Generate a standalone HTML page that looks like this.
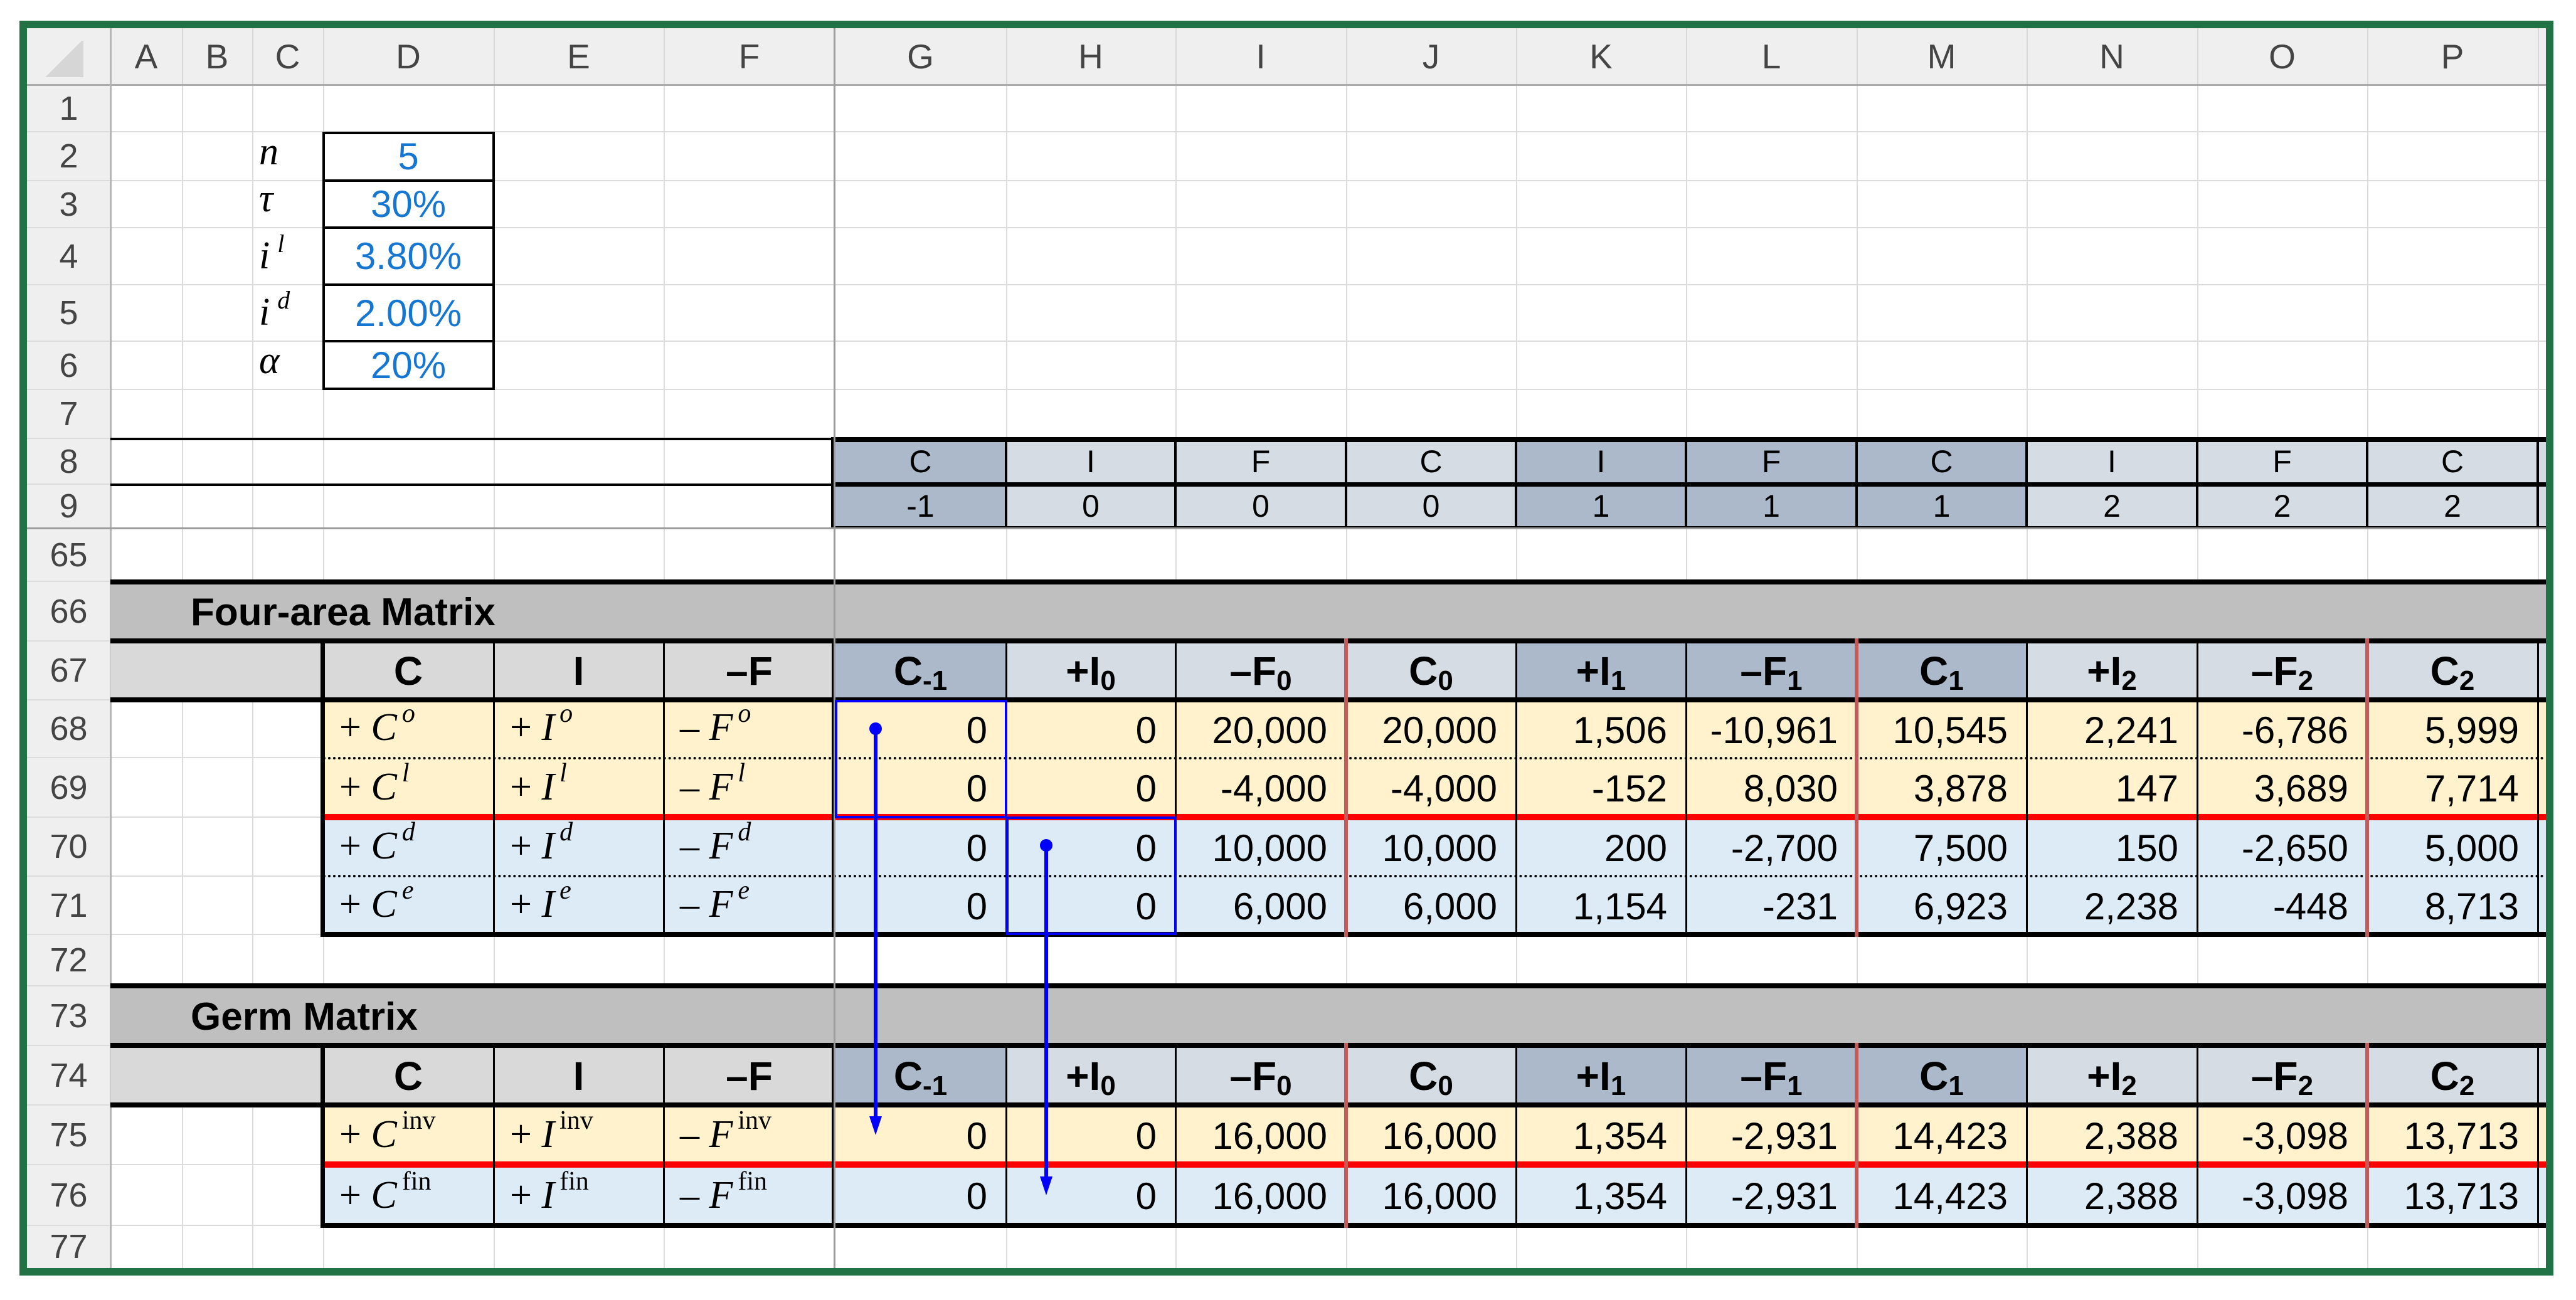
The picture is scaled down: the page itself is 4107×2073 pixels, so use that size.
<!DOCTYPE html>
<html><head><meta charset="utf-8"><style>
*{margin:0;padding:0}
body{width:4107px;height:2073px;background:#fff;position:relative;overflow:hidden;font-family:"Liberation Sans",Arial,sans-serif}
div{position:absolute;box-sizing:border-box}
.gv{top:136px;height:1886px;width:2px;background:#dcdcdc}
.gh{left:43px;width:4016px;height:2px;background:#dcdcdc}
.hv{top:44px;height:92px;width:2px;background:#d8d8d8}
.ch{top:44px;height:92px;display:flex;align-items:center;justify-content:center;font-size:55px;color:#444}
.rn{left:43px;width:133px;display:flex;align-items:center;justify-content:center;font-size:54px;color:#444}
.n{display:flex;align-items:center;justify-content:flex-end;padding-right:30px;padding-top:4px;font-size:60px;color:#000}
.hb{display:flex;align-items:center;justify-content:center;font-size:64px;font-weight:bold;padding-top:2px}
.hb sub{font-size:44px;position:relative;top:16px}
.s{display:flex;align-items:center;justify-content:center;font-size:50px}
.lb{display:flex;align-items:flex-end;padding-left:26px;padding-bottom:12px;font-family:"Liberation Serif",serif;font-size:62px;white-space:pre}
.lb i{font-style:italic}
.lb sup{font-size:42px;position:relative;top:-34px;margin-left:8px}
.pv{left:515px;width:272px;display:flex;align-items:center;justify-content:center;font-size:60px;color:#1677d2}
.pl{left:413px;font-family:"Liberation Serif",serif;font-style:italic;font-size:62px;display:flex;align-items:flex-end;padding-bottom:10px}
.pl sup{font-size:40px;position:relative;top:-32px;margin-left:12px}
.bk{background:#000}
.cD{left:515px;width:272px}.cE{left:787px;width:271px}.cF{left:1058px;width:273px}
.cG{left:1331px;width:273px}.cH{left:1604px;width:270px}.cI{left:1874px;width:272px}.cJ{left:2146px;width:271px}
.cK{left:2417px;width:271px}.cL{left:2688px;width:272px}.cM{left:2960px;width:271px}.cN{left:3231px;width:272px}
.cO{left:3503px;width:271px}.cP{left:3774px;width:272px}
.r67{top:1022px;height:94px}.r68{top:1116px;height:92px}.r69{top:1208px;height:95px}.r70{top:1303px;height:94px}.r71{top:1397px;height:93px}
.r74{top:1667px;height:95px}.r75{top:1762px;height:95px}.r76{top:1857px;height:97px}
.r8{top:699px;height:73px}.r9{top:772px;height:70px}
.dk{background:#acb9ca}.lt{background:#d6dce4}.gy{background:#d9d9d9}.ye{background:#fff2cc}.bl{background:#ddebf7}
</style></head><body>
<div style="left:43px;top:44px;width:4016px;height:92px;background:#efefef"></div>
<div style="left:43px;top:44px;width:133px;height:1979px;background:#efefef"></div>
<div style="left:70px;top:65px;width:63px;height:58px;background:linear-gradient(135deg,transparent 50%,#d6d6d6 50%)"></div>
<div class="hv" style="left:176px"></div><div class="hv" style="left:290px"></div><div class="hv" style="left:402px"></div><div class="hv" style="left:515px"></div><div class="hv" style="left:787px"></div><div class="hv" style="left:1058px"></div><div class="hv" style="left:1604px"></div><div class="hv" style="left:1874px"></div><div class="hv" style="left:2146px"></div><div class="hv" style="left:2417px"></div><div class="hv" style="left:2688px"></div><div class="hv" style="left:2960px"></div><div class="hv" style="left:3231px"></div><div class="hv" style="left:3503px"></div><div class="hv" style="left:3774px"></div><div class="hv" style="left:4046px"></div>
<div class="gv" style="left:290px"></div><div class="gv" style="left:402px"></div><div class="gv" style="left:515px"></div><div class="gv" style="left:787px"></div><div class="gv" style="left:1058px"></div><div class="gv" style="left:1604px"></div><div class="gv" style="left:1874px"></div><div class="gv" style="left:2146px"></div><div class="gv" style="left:2417px"></div><div class="gv" style="left:2688px"></div><div class="gv" style="left:2960px"></div><div class="gv" style="left:3231px"></div><div class="gv" style="left:3503px"></div><div class="gv" style="left:3774px"></div><div class="gv" style="left:4046px"></div>
<div class="gh" style="top:209px"></div><div class="gh" style="top:287px"></div><div class="gh" style="top:362px"></div><div class="gh" style="top:453px"></div><div class="gh" style="top:543px"></div><div class="gh" style="top:620px"></div><div class="gh" style="top:698px"></div><div class="gh" style="top:771px"></div><div class="gh" style="top:926px"></div><div class="gh" style="top:1021px"></div><div class="gh" style="top:1115px"></div><div class="gh" style="top:1207px"></div><div class="gh" style="top:1302px"></div><div class="gh" style="top:1396px"></div><div class="gh" style="top:1489px"></div><div class="gh" style="top:1571px"></div><div class="gh" style="top:1666px"></div><div class="gh" style="top:1761px"></div><div class="gh" style="top:1856px"></div><div class="gh" style="top:1953px"></div>
<div style="left:43px;top:134px;width:4016px;height:3px;background:#ababab"></div>
<div style="left:175px;top:44px;width:3px;height:1979px;background:#b5b5b5"></div>
<div class="ch" style="left:176px;width:114px">A</div><div class="ch" style="left:290px;width:112px">B</div><div class="ch" style="left:402px;width:113px">C</div><div class="ch cD">D</div><div class="ch cE">E</div><div class="ch cF">F</div><div class="ch cG">G</div><div class="ch cH">H</div><div class="ch cI">I</div><div class="ch cJ">J</div><div class="ch cK">K</div><div class="ch cL">L</div><div class="ch cM">M</div><div class="ch cN">N</div><div class="ch cO">O</div><div class="ch cP">P</div>
<div class="rn" style="top:136px;height:74px">1</div><div class="rn" style="top:210px;height:78px">2</div><div class="rn" style="top:288px;height:75px">3</div><div class="rn" style="top:363px;height:91px">4</div><div class="rn" style="top:454px;height:90px">5</div><div class="rn" style="top:544px;height:77px">6</div><div class="rn" style="top:621px;height:78px">7</div><div class="rn" style="top:699px;height:73px">8</div><div class="rn" style="top:772px;height:70px">9</div><div class="rn" style="top:842px;height:85px">65</div><div class="rn" style="top:927px;height:95px">66</div><div class="rn" style="top:1022px;height:94px">67</div><div class="rn" style="top:1116px;height:92px">68</div><div class="rn" style="top:1208px;height:95px">69</div><div class="rn" style="top:1303px;height:94px">70</div><div class="rn" style="top:1397px;height:93px">71</div><div class="rn" style="top:1490px;height:82px">72</div><div class="rn" style="top:1572px;height:95px">73</div><div class="rn" style="top:1667px;height:95px">74</div><div class="rn" style="top:1762px;height:95px">75</div><div class="rn" style="top:1857px;height:97px">76</div><div class="rn" style="top:1954px;height:68px">77</div>
<div class="pl" style="top:210px;height:78px">n</div>
<div class="pl" style="top:288px;height:75px">τ</div>
<div class="pl" style="top:363px;height:91px">i<sup>l</sup></div>
<div class="pl" style="top:454px;height:90px">i<sup>d</sup></div>
<div class="pl" style="top:544px;height:77px">α</div>
<div class="pv" style="top:210px;height:78px">5</div>
<div class="pv" style="top:288px;height:75px">30%</div>
<div class="pv" style="top:363px;height:91px">3.80%</div>
<div class="pv" style="top:454px;height:90px">2.00%</div>
<div class="pv" style="top:544px;height:77px">20%</div>
<div style="left:514px;top:210px;width:275px;height:412px;border:4px solid #000"></div>
<div class="bk" style="left:514px;top:286px;width:275px;height:4px"></div><div class="bk" style="left:514px;top:361px;width:275px;height:4px"></div><div class="bk" style="left:514px;top:452px;width:275px;height:4px"></div><div class="bk" style="left:514px;top:542px;width:275px;height:4px"></div>
<div class="dk cG r8"></div><div class="lt cH r8"></div><div class="lt cI r8"></div><div class="lt cJ r8"></div><div class="dk cK r8"></div><div class="dk cL r8"></div><div class="dk cM r8"></div><div class="lt cN r8"></div><div class="lt cO r8"></div><div class="lt cP r8"></div>
<div class="dk cG r9"></div><div class="lt cH r9"></div><div class="lt cI r9"></div><div class="lt cJ r9"></div><div class="dk cK r9"></div><div class="dk cL r9"></div><div class="dk cM r9"></div><div class="lt cN r9"></div><div class="lt cO r9"></div><div class="lt cP r9"></div>
<div class="lt" style="left:4046px;top:699px;width:13px;height:143px"></div>
<div class="s cG r8">C</div><div class="s cH r8">I</div><div class="s cI r8">F</div><div class="s cJ r8">C</div><div class="s cK r8">I</div><div class="s cL r8">F</div><div class="s cM r8">C</div><div class="s cN r8">I</div><div class="s cO r8">F</div><div class="s cP r8">C</div>
<div class="s cG r9">-1</div><div class="s cH r9">0</div><div class="s cI r9">0</div><div class="s cJ r9">0</div><div class="s cK r9">1</div><div class="s cL r9">1</div><div class="s cM r9">1</div><div class="s cN r9">2</div><div class="s cO r9">2</div><div class="s cP r9">2</div>
<div class="bk" style="left:176px;top:698px;width:1155px;height:4px"></div><div class="bk" style="left:176px;top:771px;width:1155px;height:4px"></div>
<div class="bk" style="left:1325px;top:697px;width:2734px;height:8px"></div>
<div class="bk" style="left:1325px;top:769px;width:2734px;height:7px"></div>
<div class="bk" style="left:1325px;top:839px;width:2734px;height:4px"></div>
<div class="bk" style="left:1325px;top:697px;width:6px;height:146px"></div>
<div class="bk" style="left:1602px;top:697px;width:4px;height:146px"></div><div class="bk" style="left:1872px;top:697px;width:4px;height:146px"></div><div class="bk" style="left:2144px;top:697px;width:4px;height:146px"></div><div class="bk" style="left:2415px;top:697px;width:4px;height:146px"></div><div class="bk" style="left:2686px;top:697px;width:4px;height:146px"></div><div class="bk" style="left:2958px;top:697px;width:4px;height:146px"></div><div class="bk" style="left:3229px;top:697px;width:4px;height:146px"></div><div class="bk" style="left:3501px;top:697px;width:4px;height:146px"></div><div class="bk" style="left:3772px;top:697px;width:4px;height:146px"></div><div class="bk" style="left:4044px;top:697px;width:4px;height:146px"></div>

<div style="left:176px;top:927px;width:3883px;height:95px;background:#bfbfbf"></div>
<div style="left:304px;top:927px;height:95px;display:flex;align-items:center;font-size:62px;font-weight:bold;padding-top:4px">Four-area Matrix</div>
<div class="gy" style="left:176px;top:1022px;width:339px;height:94px"></div>
<div class="gy cD r67"></div><div class="gy cE r67"></div><div class="gy cF r67"></div>
<div class="dk cG r67"></div><div class="lt cH r67"></div><div class="lt cI r67"></div><div class="lt cJ r67"></div><div class="dk cK r67"></div><div class="dk cL r67"></div><div class="dk cM r67"></div><div class="lt cN r67"></div><div class="lt cO r67"></div><div class="lt cP r67"></div><div class="lt" style="left:4046px;top:1022px;width:13px;height:94px"></div>
<div class="ye" style="left:515px;top:1116px;width:3544px;height:187px"></div>
<div class="bl" style="left:515px;top:1303px;width:3544px;height:187px"></div>
<div class="hb cD r67">C</div><div class="hb cE r67">I</div><div class="hb cF r67">–F</div>
<div class="hb cG r67">C<sub>-1</sub></div><div class="hb cH r67">+I<sub>0</sub></div><div class="hb cI r67">–F<sub>0</sub></div><div class="hb cJ r67">C<sub>0</sub></div><div class="hb cK r67">+I<sub>1</sub></div><div class="hb cL r67">–F<sub>1</sub></div><div class="hb cM r67">C<sub>1</sub></div><div class="hb cN r67">+I<sub>2</sub></div><div class="hb cO r67">–F<sub>2</sub></div><div class="hb cP r67">C<sub>2</sub></div>
<div class="lb cD r68">+ <i>C</i><sup><i>o</i></sup></div><div class="lb cE r68">+ <i>I</i><sup><i>o</i></sup></div><div class="lb cF r68">– <i>F</i><sup><i>o</i></sup></div>
<div class="lb cD r69">+ <i>C</i><sup><i>l</i></sup></div><div class="lb cE r69">+ <i>I</i><sup><i>l</i></sup></div><div class="lb cF r69">– <i>F</i><sup><i>l</i></sup></div>
<div class="lb cD r70">+ <i>C</i><sup><i>d</i></sup></div><div class="lb cE r70">+ <i>I</i><sup><i>d</i></sup></div><div class="lb cF r70">– <i>F</i><sup><i>d</i></sup></div>
<div class="lb cD r71">+ <i>C</i><sup><i>e</i></sup></div><div class="lb cE r71">+ <i>I</i><sup><i>e</i></sup></div><div class="lb cF r71">– <i>F</i><sup><i>e</i></sup></div>
<div class="n cG r68">0</div><div class="n cH r68">0</div><div class="n cI r68">20,000</div><div class="n cJ r68">20,000</div><div class="n cK r68">1,506</div><div class="n cL r68">-10,961</div><div class="n cM r68">10,545</div><div class="n cN r68">2,241</div><div class="n cO r68">-6,786</div><div class="n cP r68">5,999</div>
<div class="n cG r69">0</div><div class="n cH r69">0</div><div class="n cI r69">-4,000</div><div class="n cJ r69">-4,000</div><div class="n cK r69">-152</div><div class="n cL r69">8,030</div><div class="n cM r69">3,878</div><div class="n cN r69">147</div><div class="n cO r69">3,689</div><div class="n cP r69">7,714</div>
<div class="n cG r70">0</div><div class="n cH r70">0</div><div class="n cI r70">10,000</div><div class="n cJ r70">10,000</div><div class="n cK r70">200</div><div class="n cL r70">-2,700</div><div class="n cM r70">7,500</div><div class="n cN r70">150</div><div class="n cO r70">-2,650</div><div class="n cP r70">5,000</div>
<div class="n cG r71">0</div><div class="n cH r71">0</div><div class="n cI r71">6,000</div><div class="n cJ r71">6,000</div><div class="n cK r71">1,154</div><div class="n cL r71">-231</div><div class="n cM r71">6,923</div><div class="n cN r71">2,238</div><div class="n cO r71">-448</div><div class="n cP r71">8,713</div>
<div class="bk" style="left:176px;top:924px;width:3883px;height:8px"></div>
<div class="bk" style="left:176px;top:1018px;width:3883px;height:8px"></div>
<div class="bk" style="left:176px;top:1112px;width:3883px;height:8px"></div>
<div style="left:515px;top:1207px;width:3544px;height:0;border-top:4px dotted #000"></div>
<div style="left:515px;top:1395px;width:3544px;height:0;border-top:4px dotted #000"></div>
<div style="left:512px;top:1298px;width:3547px;height:10px;background:#ff0000"></div>
<div class="bk" style="left:512px;top:1486px;width:3547px;height:8px"></div>
<div class="bk" style="left:511px;top:1022px;width:7px;height:472px"></div>
<div class="bk" style="left:786px;top:1022px;width:3px;height:468px"></div><div class="bk" style="left:1057px;top:1022px;width:3px;height:468px"></div><div class="bk" style="left:1326px;top:1022px;width:4px;height:468px"></div><div class="bk" style="left:1603px;top:1022px;width:3px;height:468px"></div><div class="bk" style="left:1873px;top:1022px;width:3px;height:468px"></div><div class="bk" style="left:2416px;top:1022px;width:3px;height:468px"></div><div class="bk" style="left:2687px;top:1022px;width:3px;height:468px"></div><div class="bk" style="left:3230px;top:1022px;width:3px;height:468px"></div><div class="bk" style="left:3502px;top:1022px;width:3px;height:468px"></div><div class="bk" style="left:4045px;top:1022px;width:3px;height:468px"></div>
<div style="left:2143px;top:1018px;width:6px;height:476px;background:#c55a5a"></div>
<div style="left:2957px;top:1018px;width:6px;height:476px;background:#c55a5a"></div>
<div style="left:3771px;top:1018px;width:6px;height:476px;background:#c55a5a"></div>

<div style="left:176px;top:1572px;width:3883px;height:95px;background:#bfbfbf"></div>
<div style="left:304px;top:1572px;height:95px;display:flex;align-items:center;font-size:62px;font-weight:bold;padding-top:4px">Germ Matrix</div>
<div class="gy" style="left:176px;top:1667px;width:339px;height:95px"></div>
<div class="gy cD r74"></div><div class="gy cE r74"></div><div class="gy cF r74"></div>
<div class="dk cG r74"></div><div class="lt cH r74"></div><div class="lt cI r74"></div><div class="lt cJ r74"></div><div class="dk cK r74"></div><div class="dk cL r74"></div><div class="dk cM r74"></div><div class="lt cN r74"></div><div class="lt cO r74"></div><div class="lt cP r74"></div><div class="lt" style="left:4046px;top:1667px;width:13px;height:95px"></div>
<div class="ye" style="left:515px;top:1762px;width:3544px;height:95px"></div>
<div class="bl" style="left:515px;top:1857px;width:3544px;height:97px"></div>
<div class="hb cD r74">C</div><div class="hb cE r74">I</div><div class="hb cF r74">–F</div>
<div class="hb cG r74">C<sub>-1</sub></div><div class="hb cH r74">+I<sub>0</sub></div><div class="hb cI r74">–F<sub>0</sub></div><div class="hb cJ r74">C<sub>0</sub></div><div class="hb cK r74">+I<sub>1</sub></div><div class="hb cL r74">–F<sub>1</sub></div><div class="hb cM r74">C<sub>1</sub></div><div class="hb cN r74">+I<sub>2</sub></div><div class="hb cO r74">–F<sub>2</sub></div><div class="hb cP r74">C<sub>2</sub></div>
<div class="lb cD r75">+ <i>C</i><sup>inv</sup></div><div class="lb cE r75">+ <i>I</i><sup>inv</sup></div><div class="lb cF r75">– <i>F</i><sup>inv</sup></div>
<div class="lb cD r76">+ <i>C</i><sup>fin</sup></div><div class="lb cE r76">+ <i>I</i><sup>fin</sup></div><div class="lb cF r76">– <i>F</i><sup>fin</sup></div>
<div class="n cG r75">0</div><div class="n cH r75">0</div><div class="n cI r75">16,000</div><div class="n cJ r75">16,000</div><div class="n cK r75">1,354</div><div class="n cL r75">-2,931</div><div class="n cM r75">14,423</div><div class="n cN r75">2,388</div><div class="n cO r75">-3,098</div><div class="n cP r75">13,713</div>
<div class="n cG r76">0</div><div class="n cH r76">0</div><div class="n cI r76">16,000</div><div class="n cJ r76">16,000</div><div class="n cK r76">1,354</div><div class="n cL r76">-2,931</div><div class="n cM r76">14,423</div><div class="n cN r76">2,388</div><div class="n cO r76">-3,098</div><div class="n cP r76">13,713</div>
<div class="bk" style="left:176px;top:1568px;width:3883px;height:8px"></div>
<div class="bk" style="left:176px;top:1663px;width:3883px;height:8px"></div>
<div class="bk" style="left:176px;top:1758px;width:3883px;height:8px"></div>
<div style="left:512px;top:1852px;width:3547px;height:10px;background:#ff0000"></div>
<div class="bk" style="left:512px;top:1950px;width:3547px;height:8px"></div>
<div class="bk" style="left:511px;top:1667px;width:7px;height:291px"></div>
<div class="bk" style="left:786px;top:1667px;width:3px;height:287px"></div><div class="bk" style="left:1057px;top:1667px;width:3px;height:287px"></div><div class="bk" style="left:1326px;top:1667px;width:4px;height:287px"></div><div class="bk" style="left:1603px;top:1667px;width:3px;height:287px"></div><div class="bk" style="left:1873px;top:1667px;width:3px;height:287px"></div><div class="bk" style="left:2416px;top:1667px;width:3px;height:287px"></div><div class="bk" style="left:2687px;top:1667px;width:3px;height:287px"></div><div class="bk" style="left:3230px;top:1667px;width:3px;height:287px"></div><div class="bk" style="left:3502px;top:1667px;width:3px;height:287px"></div><div class="bk" style="left:4045px;top:1667px;width:3px;height:287px"></div>
<div style="left:2143px;top:1663px;width:6px;height:295px;background:#c55a5a"></div>
<div style="left:2957px;top:1663px;width:6px;height:295px;background:#c55a5a"></div>
<div style="left:3771px;top:1663px;width:6px;height:295px;background:#c55a5a"></div>

<div style="left:1329px;top:44px;width:3px;height:1979px;background:#9c9c9c"></div>
<div style="left:43px;top:841px;width:4016px;height:3px;background:#9c9c9c"></div>

<div style="left:1331px;top:1116px;width:275px;height:189px;border:4px solid #0000ff"></div>
<div style="left:1604px;top:1302px;width:272px;height:189px;border:4px solid #0000ff"></div>
<svg style="position:absolute;left:0;top:0" width="4107" height="2073">
<g fill="#0000ff" stroke="#0000ff">
<circle cx="1396" cy="1162" r="10" stroke="none"/>
<line x1="1396" y1="1162" x2="1396" y2="1780" stroke-width="6"/>
<polygon points="1386,1780 1406,1780 1396,1810" stroke="none"/>
<circle cx="1668" cy="1348" r="10" stroke="none"/>
<line x1="1668" y1="1348" x2="1668" y2="1876" stroke-width="6"/>
<polygon points="1658,1876 1678,1876 1668,1906" stroke="none"/>
</g>
</svg>
<div style="left:31px;top:33px;width:4040px;height:2001px;border:12px solid #217346"></div>
</body></html>
